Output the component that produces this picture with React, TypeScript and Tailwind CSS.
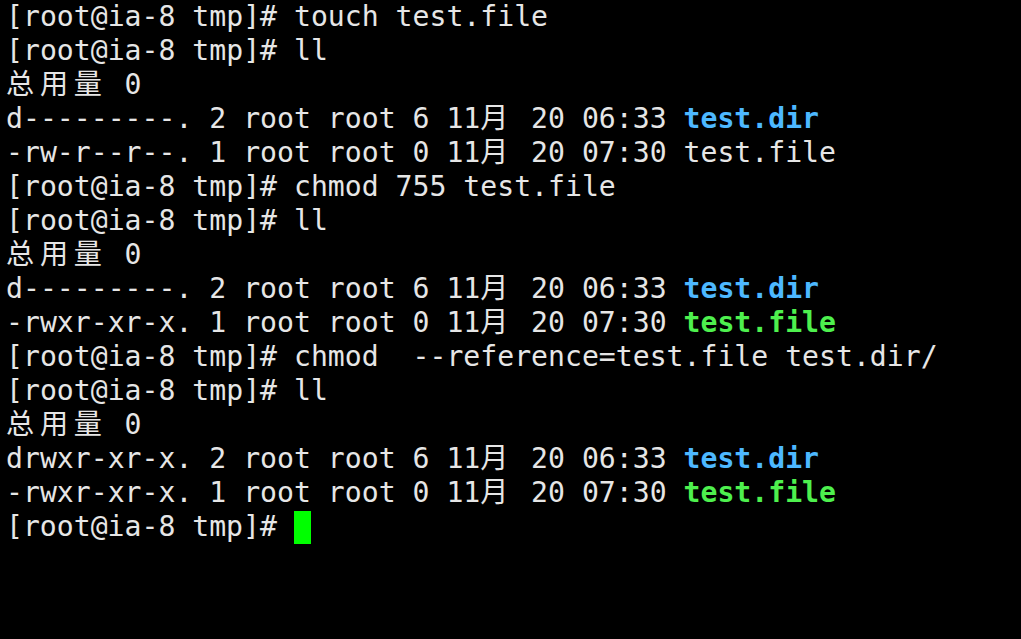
import React from 'react';

type Seg = { t: string; c?: 'dir' | 'exe' };

const prompt = '[root@ia-8 tmp]# ';

const lines: Seg[][] = [
  [{ t: prompt + 'touch test.file' }],
  [{ t: prompt + 'll' }],
  [{ t: '总用量 0' }],
  [{ t: 'd---------. 2 root root 6 11月 20 06:33 ' }, { t: 'test.dir', c: 'dir' }],
  [{ t: '-rw-r--r--. 1 root root 0 11月 20 07:30 test.file' }],
  [{ t: prompt + 'chmod 755 test.file' }],
  [{ t: prompt + 'll' }],
  [{ t: '总用量 0' }],
  [{ t: 'd---------. 2 root root 6 11月 20 06:33 ' }, { t: 'test.dir', c: 'dir' }],
  [{ t: '-rwxr-xr-x. 1 root root 0 11月 20 07:30 ' }, { t: 'test.file', c: 'exe' }],
  [{ t: prompt + 'chmod  --reference=test.file test.dir/' }],
  [{ t: prompt + 'll' }],
  [{ t: '总用量 0' }],
  [{ t: 'drwxr-xr-x. 2 root root 6 11月 20 06:33 ' }, { t: 'test.dir', c: 'dir' }],
  [{ t: '-rwxr-xr-x. 1 root root 0 11月 20 07:30 ' }, { t: 'test.file', c: 'exe' }],
];

// CJK glyphs take two terminal cells
const Cells = ({ text }: { text: string }) => (
  <>
    {Array.from(text).map((ch, i) =>
      /[\u4e00-\u9fff]/.test(ch) ? (
        <span key={i} className="inline-block w-[33.88px] text-left">{ch}</span>
      ) : (
        <React.Fragment key={i}>{ch}</React.Fragment>
      )
    )}
  </>
);

const App = () => {
  return (
    <div className="w-[1021px] h-[639px] bg-black overflow-hidden pl-[6px] text-[#e6e6e6] text-[28.14px] leading-[34px] whitespace-pre font-['DejaVu_Sans_Mono','Noto_Sans_CJK_SC',monospace]">
      {lines.map((segs, i) => (
        <div key={i} className="h-[34px]">
          {segs.map((s, j) => (
            <span
              key={j}
              className={
                s.c === 'dir'
                  ? 'font-bold text-[#4db8ff]'
                  : s.c === 'exe'
                  ? 'font-bold text-[#4ef04e]'
                  : ''
              }
            >
              <Cells text={s.t} />
            </span>
          ))}
        </div>
      ))}
      <div className="h-[34px] flex items-center">
        <span>{prompt}</span>
        <span className="inline-block w-[17px] h-[33px] bg-[#00ff00]" />
      </div>
    </div>
  );
};

export default App;
